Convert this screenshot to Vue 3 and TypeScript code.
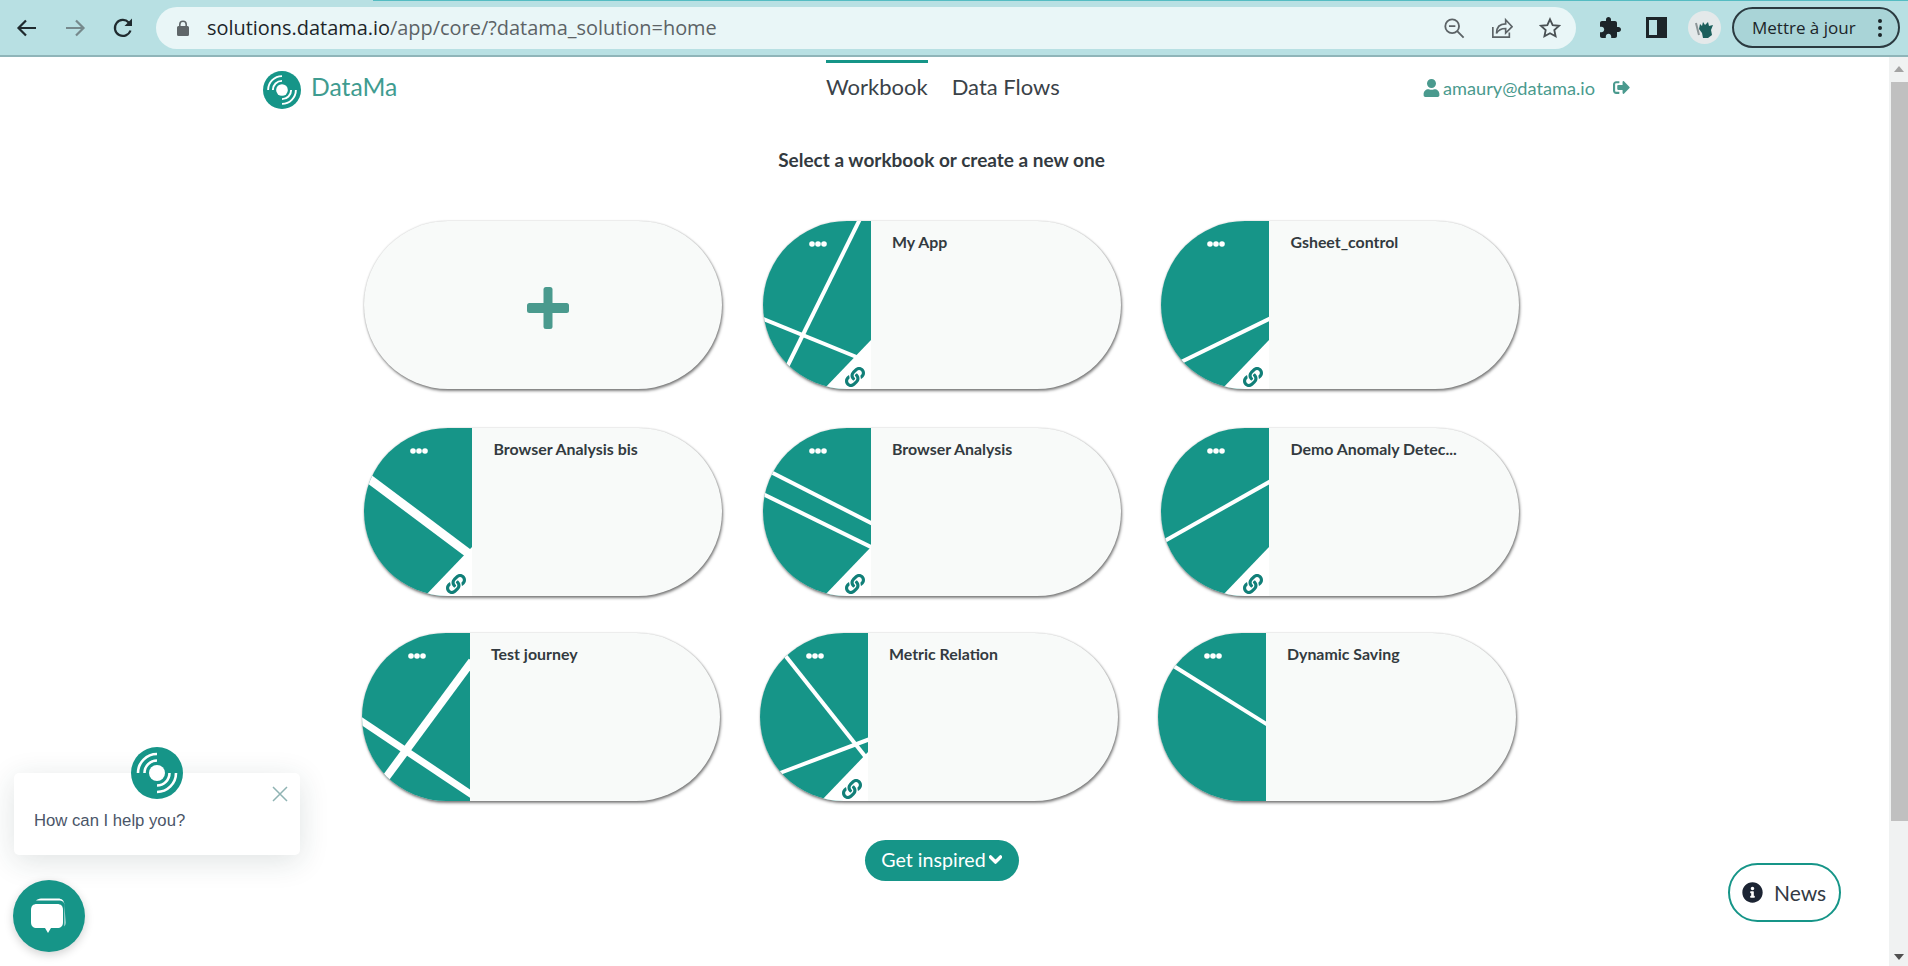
<script setup lang="ts">
interface Stripe {
  d: string
  width: number
}

interface Workbook {
  name: string
  stripes: Stripe[]
  linked: boolean
}

const linkPath =
  "M326.612 185.391c59.747 59.809 58.927 155.698.36 214.59-.11.12-.24.25-.36.37l-67.2 67.2c-59.27 59.27-155.699 59.262-214.96 0-59.27-59.26-59.27-155.7 0-214.96l37.106-37.106c9.84-9.84 26.786-3.3 27.294 10.606.648 17.722 3.826 35.527 9.69 52.721 1.986 5.822.567 12.262-3.783 16.612l-13.087 13.087c-28.026 28.026-28.905 73.66-1.155 101.96 28.024 28.579 74.086 28.749 102.325.51l67.2-67.19c28.191-28.191 28.073-73.757 0-101.83-3.701-3.694-7.429-6.564-10.341-8.569a16.037 16.037 0 0 1-6.947-12.606c-.396-10.567 3.348-21.456 11.698-29.806l21.054-21.055c5.521-5.521 14.182-6.199 20.584-1.731a152.482 152.482 0 0 1 20.522 17.197zM467.547 44.449c-59.261-59.262-155.69-59.27-214.96 0l-67.2 67.2c-.12.12-.25.25-.36.37-58.566 58.892-59.387 154.781.36 214.59a152.454 152.454 0 0 0 20.521 17.196c6.402 4.468 15.064 3.789 20.584-1.731l21.054-21.055c8.35-8.35 12.094-19.239 11.698-29.806a16.037 16.037 0 0 0-6.947-12.606c-2.912-2.005-6.64-4.875-10.341-8.569-28.073-28.073-28.191-73.639 0-101.83l67.2-67.19c28.239-28.239 74.3-28.069 102.325.51 27.75 28.3 26.872 73.934-1.155 101.96l-13.087 13.087c-4.35 4.35-5.769 10.79-3.783 16.612 5.864 17.194 9.042 34.999 9.69 52.721.509 13.906 17.454 20.446 27.294 10.606l37.106-37.106c59.271-59.259 59.271-155.699.001-214.959z"

const rows: Workbook[][] = [
  [
    {
      name: "My App",
      linked: true,
      stripes: [
        { d: "M97 -2 L24 146", width: 4 },
        { d: "M-2 97 L96 137", width: 4 },
      ],
    },
    {
      name: "Gsheet_control",
      linked: true,
      stripes: [{ d: "M110 97 L20 141", width: 4 }],
    },
  ],
  [
    {
      name: "Browser Analysis bis",
      linked: true,
      stripes: [{ d: "M0 47 L108 128", width: 9 }],
    },
    {
      name: "Browser Analysis",
      linked: true,
      stripes: [
        { d: "M0 40 L110 96", width: 4 },
        { d: "M0 66 L110 120", width: 4 },
      ],
    },
    {
      name: "Demo Anomaly Detec...",
      linked: true,
      stripes: [{ d: "M110 53 L0 115", width: 4 }],
    },
  ],
  [
    {
      name: "Test journey",
      linked: false,
      stripes: [
        { d: "M110 28 L23 146", width: 8 },
        { d: "M-2 87 L110 162", width: 7 },
      ],
    },
    {
      name: "Metric Relation",
      linked: true,
      stripes: [
        { d: "M24 21 L108 127", width: 4 },
        { d: "M110 106 L20 140", width: 4 },
      ],
    },
    {
      name: "Dynamic Saving",
      linked: false,
      stripes: [{ d: "M14 32 L110 92", width: 4 }],
    },
  ],
]
</script>

<template>
  <div class="page">
    <!-- browser toolbar -->
    <div class="toolbar">
      <div class="nav-buttons">
        <svg class="tb-icon" viewBox="0 0 24 24" fill="none" stroke="#1f2a2e" stroke-width="2.2">
          <path d="M21 12H4M11 4.5 3.5 12l7.5 7.5" />
        </svg>
        <svg class="tb-icon" viewBox="0 0 24 24" fill="none" stroke="#76898c" stroke-width="2.2">
          <path d="M3 12h17M13 4.5l7.5 7.5-7.5 7.5" />
        </svg>
        <svg class="tb-icon" viewBox="0 0 24 24" fill="none" stroke="#1f2a2e" stroke-width="2.2">
          <path d="M19.5 14.5A8 8 0 1 1 17.7 6.4L20 8.5" />
          <path d="M21 2.5v7.5h-7.5z" fill="#1f2a2e" stroke="none" />
        </svg>
      </div>

      <div class="omnibox">
        <svg class="lock" viewBox="0 0 12 16">
          <path d="M2 6V4.5a4 4 0 0 1 8 0V6h.5A1.5 1.5 0 0 1 12 7.5v7a1.5 1.5 0 0 1-1.5 1.5h-9A1.5 1.5 0 0 1 0 14.5v-7A1.5 1.5 0 0 1 1.5 6zm1.6 0h4.8V4.5a2.4 2.4 0 0 0-4.8 0z" fill="#5f6669" />
        </svg>
        <span class="url"><b>solutions.datama.io</b>/app/core/?datama_solution=home</span>
        <div class="omni-actions">
          <svg class="omni-icon" viewBox="0 0 24 24" fill="none" stroke="#5c6366" stroke-width="2">
            <circle cx="10" cy="10" r="7.5" />
            <path d="M6.5 10h7M15.5 15.5l7 7" />
          </svg>
          <svg class="omni-icon" viewBox="0 0 24 24" fill="none" stroke="#5c6366" stroke-width="1.8">
            <path d="M2 11v11h18v-5" />
            <path d="M6 18c0-7 4-10.500 10-10.500V3l7 7.500-7 7v-5C11 12.500 8 14 6 18z" />
          </svg>
          <svg class="omni-icon" viewBox="0 0 24 24" fill="none" stroke="#4a5154" stroke-width="2">
            <path d="M12 2.500l2.900 6.300 6.900.8-5.100 4.700 1.400 6.800-6.100-3.400-6.100 3.400 1.400-6.800-5.100-4.700 6.900-.8z" />
          </svg>
        </div>
      </div>

      <svg class="puzzle" viewBox="0 0 24 24">
        <path d="M20.500 11H19V7c0-1.100-.9-2-2-2h-4V3.500C13 2.120 11.880 1 10.500 1S8 2.120 8 3.500V5H4c-1.100 0-1.990.9-1.990 2v3.800H3.500c1.490 0 2.700 1.210 2.700 2.700s-1.210 2.700-2.700 2.700H2V20c0 1.100.9 2 2 2h3.800v-1.500c0-1.490 1.210-2.700 2.700-2.700 1.490 0 2.700 1.210 2.700 2.700V22H17c1.100 0 2-.9 2-2v-4h1.500c1.380 0 2.500-1.120 2.500-2.500S21.880 11 20.500 11z" fill="#1c2529" />
      </svg>
      <div class="side-panel"><span></span></div>
      <div class="avatar">
        <svg viewBox="0 0 33 33">
          <path d="M12 13l2 2 1-4 2 3 3-3 1 4 4-1-2 5 1 5-4 3h-5l-1-5-3-4z" fill="#1c5f5c" />
          <path d="M8 12l3 12" stroke="#8c9597" stroke-width="2" />
        </svg>
      </div>
      <div class="update-btn">
        <span>Mettre à jour</span>
        <i class="kebab"></i>
      </div>
    </div>

    <div class="viewport">
      <main class="main">
        <header class="header">
          <div class="brand">
            <svg class="logo" viewBox="0 0 52 52">
              <circle cx="26" cy="26" r="26" fill="#169588" />
              <circle cx="26" cy="26" r="8" fill="#fff" />
              <path d="M7 26A19 19 0 0 1 26 7M13.500 26A12.500 12.500 0 0 1 26 13.500M45 26A19 19 0 0 1 26 45M38.500 26A12.500 12.500 0 0 1 26 38.500" fill="none" stroke="#fff" stroke-width="2.600" />
            </svg>
            <span class="brand-name">DataMa</span>
          </div>
          <nav class="nav">
            <a class="nav-link active">Workbook</a>
            <a class="nav-link">Data Flows</a>
          </nav>
          <div class="user">
            <svg class="user-icon" viewBox="0 0 448 512">
              <path d="M224 256c70.700 0 128-57.300 128-128S294.700 0 224 0 96 57.300 96 128s57.300 128 128 128zm89.600 32h-16.700c-22.200 10.200-46.900 16-72.900 16s-50.600-5.800-72.900-16h-16.700C60.200 288 0 348.200 0 422.400V464c0 26.500 21.500 48 48 48h352c26.500 0 48-21.500 48-48v-41.600c0-74.200-60.200-134.400-134.400-134.400z" />
            </svg>
            <span class="email">amaury@datama.io</span>
            <svg class="logout-icon" viewBox="0 0 512 512">
              <path d="M497 273L329 441c-15 15-41 4.500-41-17v-96H152c-13.300 0-24-10.700-24-24v-96c0-13.300 10.700-24 24-24h136V88c0-21.400 25.900-32 41-17l168 168c9.300 9.400 9.300 24.600 0 34zM192 436v-40c0-6.600-5.400-12-12-12H96c-17.700 0-32-14.300-32-32V160c0-17.700 14.300-32 32-32h84c6.600 0 12-5.400 12-12V76c0-6.600-5.400-12-12-12H96c-53 0-96 43-96 96v192c0 53 43 96 96 96h84c6.600 0 12-5.400 12-12z" />
            </svg>
          </div>
        </header>

        <h1 class="title">Select a workbook or create a new one</h1>

        <section class="workbooks">
          <div v-for="(row, r) in rows" :key="r" class="row" :class="'row-' + r">
            <div v-if="r === 0" class="card card-new">
              <svg class="plus" viewBox="0 0 42 42">
                <rect x="0" y="16" width="42" height="10" rx="2.500" />
                <rect x="16.500" y="0" width="9" height="42" rx="2.500" />
              </svg>
            </div>
            <div v-for="wb in row" :key="wb.name" class="card">
              <svg class="card-panel" viewBox="0 0 108 168">
                <rect width="108" height="168" fill="#169588" />
                <path v-for="s in wb.stripes" :key="s.d" :d="s.d" stroke="#fff" :stroke-width="s.width" fill="none" />
                <template v-if="wb.linked">
                  <path d="M109 118 L60 169 H109 Z" fill="#fff" />
                  <svg x="82" y="146" width="20" height="20" viewBox="0 0 512 512">
                    <path :d="linkPath" fill="#117f78" />
                  </svg>
                </template>
                <circle cx="49" cy="23" r="2.800" fill="#fff" />
                <circle cx="55" cy="23" r="2.800" fill="#fff" />
                <circle cx="61" cy="23" r="2.800" fill="#fff" />
              </svg>
              <span class="card-name">{{ wb.name }}</span>
            </div>
          </div>
        </section>

        <button class="inspired">
          Get inspired
          <svg class="chevron" viewBox="0 0 448 512">
            <path d="M207.029 381.476L12.686 187.132c-9.373-9.373-9.373-24.569 0-33.941l22.667-22.667c9.357-9.357 24.522-9.375 33.901-.04L224 284.505l154.745-154.021c9.379-9.335 24.544-9.317 33.901.04l22.667 22.667c9.373 9.373 9.373 24.569 0 33.941L240.971 381.476c-9.373 9.372-24.569 9.372-33.942 0z" />
          </svg>
        </button>
      </main>

      <div class="scrollbar">
        <i class="arrow-up"></i>
        <div class="thumb"></div>
        <i class="arrow-down"></i>
      </div>

      <!-- floating widgets -->
      <div class="chat-card">
        <svg class="chat-logo" viewBox="0 0 52 52">
          <circle cx="26" cy="26" r="26" fill="#169588" />
          <circle cx="26" cy="26" r="8" fill="#fff" />
          <path d="M7 26A19 19 0 0 1 26 7M13.500 26A12.500 12.500 0 0 1 26 13.500M45 26A19 19 0 0 1 26 45M38.500 26A12.500 12.500 0 0 1 26 38.500" fill="none" stroke="#fff" stroke-width="2.600" />
        </svg>
        <svg class="chat-close" viewBox="0 0 16 16" fill="none" stroke="#8fb3b3" stroke-width="1.500">
          <path d="M1 1l14 14M15 1L1 15" />
        </svg>
        <span class="chat-text">How can I help you?</span>
      </div>
      <div class="chat-bubble">
        <svg viewBox="0 0 40 40" width="40" height="40">
          <path d="M12 2.500h17c4 0 6 2 6.500 6l1 18c0 2-.5 3-1 4V10c0-4-2-5.500-6-5.500H7c1-1 3-2 5-2z" fill="#fff" />
          <path d="M8 8h20c4 0 6 2 6 6v12c0 4-2 6-6 6h-6l-3 5-3-5H8c-4 0-6-2-6-6V14c0-4 2-6 6-6z" fill="#fff" />
        </svg>
      </div>
      <div class="news">
        <svg class="news-icon" viewBox="0 0 512 512">
          <path d="M256 8C119.043 8 8 119.083 8 256c0 136.997 111.043 248 248 248s248-111.003 248-248C504 119.083 392.957 8 256 8zm0 110c23.196 0 42 18.804 42 42s-18.804 42-42 42-42-18.804-42-42 18.804-42 42-42zm56 254c0 6.627-5.373 12-12 12h-88c-6.627 0-12-5.373-12-12v-24c0-6.627 5.373-12 12-12h12v-64h-12c-6.627 0-12-5.373-12-12v-24c0-6.627 5.373-12 12-12h64c6.627 0 12 5.373 12 12v100h12c6.627 0 12 5.373 12 12v24z" />
        </svg>
        <span>News</span>
      </div>
    </div>
  </div>
</template>

<style scoped>
.page {
  height: 966px;
  display: flex;
  flex-direction: column;
  overflow: hidden;
  background: #fff;
  font-family: Lato, "Liberation Sans", sans-serif;
  color: #333a40;
}

.toolbar {
  position: relative;
  flex: none;
  height: 55px;
  box-sizing: content-box;
  border-bottom: 2px solid #8fb5b9;
  background: #b8e0e3;
  display: flex;
  align-items: center;
}

.toolbar::before {
  content: "";
  position: absolute;
  top: 0;
  left: 373px;
  right: 0;
  height: 1px;
  background: #55bcc2;
}

.nav-buttons {
  flex: none;
  width: 156px;
  padding-left: 15px;
  box-sizing: border-box;
  display: flex;
  gap: 24px;
}

.tb-icon {
  width: 24px;
  height: 24px;
}

.omnibox {
  flex: none;
  width: 1420px;
  height: 42px;
  border-radius: 21px;
  background: #e9f6f7;
  display: flex;
  align-items: center;
  padding-left: 21px;
  box-sizing: border-box;
}

.lock {
  width: 12px;
  height: 16px;
}

.url {
  margin-left: 18px;
  font-family: "Open Sans", sans-serif;
  font-size: 19.930px;
  color: #5c6366;
  white-space: nowrap;
}

.url b {
  font-weight: 400;
  color: #1c2529;
}

.omni-actions {
  margin-left: auto;
  margin-right: 15px;
  display: flex;
  gap: 26px;
}

.omni-icon {
  width: 22px;
  height: 22px;
}

.puzzle {
  flex: none;
  width: 24px;
  height: 24px;
  margin-left: 22px;
}

.side-panel {
  flex: none;
  width: 21px;
  height: 21px;
  margin-left: 24px;
  box-sizing: border-box;
  border: 3px solid #1c2529;
  background: #1c2529;
  display: flex;
}

.side-panel span {
  width: 8px;
  background: #b8e0e3;
}

.avatar {
  flex: none;
  width: 33px;
  height: 33px;
  margin-left: 21px;
  border-radius: 50%;
  background: #e4e9ea;
}

.avatar svg {
  display: block;
}

.update-btn {
  flex: none;
  width: 168px;
  height: 41px;
  margin-left: 11px;
  box-sizing: border-box;
  border: 2px solid #2b3a40;
  border-radius: 21px;
  background: #a9d4d7;
  display: flex;
  align-items: center;
  padding-left: 18px;
  font-family: "Open Sans", sans-serif;
  font-size: 17px;
  color: #1c2529;
  white-space: nowrap;
}

.kebab {
  margin-left: 22px;
  width: 4px;
  height: 4px;
  border-radius: 50%;
  background: #1c2529;
  box-shadow: 0 -7px 0 #1c2529, 0 7px 0 #1c2529;
}

.viewport {
  position: relative;
  flex: 1;
  display: flex;
  min-height: 0;
}

.main {
  flex: none;
  width: 1883px;
  display: flex;
  flex-direction: column;
  align-items: center;
}

.header {
  align-self: stretch;
  height: 60px;
  padding: 3px 253px 0 263px;
  display: grid;
  grid-template-columns: 563px auto 1fr;
  box-sizing: border-box;
}

.brand {
  display: flex;
  align-items: center;
  gap: 10px;
  margin-top: 3px;
}

.logo {
  width: 38px;
  height: 38px;
}

.brand-name {
  margin-top: -7px;
  font-size: 24.700px;
  color: #3f9c90;
}

.nav {
  display: flex;
  gap: 24px;
}

.nav-link {
  border-top: 3px solid transparent;
  padding-top: 10px;
  font-size: 22px;
  line-height: 28px;
  color: #3a4248;
}

.nav-link.active {
  border-top-color: #169588;
}

.user {
  display: flex;
  align-items: center;
  justify-content: flex-end;
  margin-top: -2px;
  color: #4a9a8e;
}

.user-icon {
  width: 17px;
  height: 18px;
  fill: #4a9a8e;
}

.email {
  margin-left: 3px;
  font-size: 18.200px;
}

.logout-icon {
  width: 17px;
  height: 17px;
  margin-left: 18px;
  fill: #4a9a8e;
}

.title {
  margin: 31px 0 48.500px;
  font-size: 19px;
  line-height: 24px;
  font-weight: 700;
  color: #333a40;
}

.workbooks {
  display: flex;
  flex-direction: column;
}

.row {
  display: flex;
  justify-content: flex-start;
  gap: 40.500px;
}

.row-1 {
  margin-top: 39.500px;
}

.row-2 {
  margin-top: 37px;
  margin-left: -2.500px;
  gap: 40px;
}

.card {
  flex: none;
  width: 358px;
  height: 168px;
  border-radius: 84px;
  overflow: hidden;
  background: #f8faf9;
  box-shadow: 0 0 2px rgba(0, 0, 0, 0.2), 1px 2px 3px rgba(0, 0, 0, 0.5);
  display: flex;
  align-items: flex-start;
}

.card-new {
  align-items: center;
  justify-content: center;
  padding: 7px 0 0 10px;
  box-sizing: border-box;
}

.plus {
  width: 42px;
  height: 42px;
  fill: #4a9a8e;
}

.card-panel {
  flex: none;
  width: 108px;
  height: 168px;
}

.card-name {
  margin: 11px 0 0 21.500px;
  font-size: 15.900px;
  line-height: 20px;
  font-weight: 700;
  color: #333a40;
  white-space: nowrap;
}

.inspired {
  margin-top: 39px;
  width: 154px;
  height: 41px;
  border: none;
  border-radius: 21px;
  background: #169588;
  color: #fff;
  font-family: Lato, sans-serif;
  font-size: 19.600px;
  display: flex;
  align-items: center;
  justify-content: center;
  gap: 3px;
  padding: 0 0 2px;
}

.chevron {
  width: 13px;
  height: 15px;
  fill: #fff;
  stroke: #fff;
  stroke-width: 40;
}

.scrollbar {
  flex: none;
  width: 19px;
  margin-left: 6px;
  background: #f0f2f2;
  display: flex;
  flex-direction: column;
  align-items: flex-end;
  position: relative;
}

.thumb {
  width: 17px;
  height: 739px;
  margin-top: 10px;
  background: #c0c0c0;
}

.arrow-up {
  margin: 9px 4px 0 0;
  width: 0;
  height: 0;
  border-left: 5px solid transparent;
  border-right: 5px solid transparent;
  border-bottom: 6px solid #a3a3a3;
}

.arrow-down {
  margin: auto 4px 6px 0;
  width: 0;
  height: 0;
  border-left: 5px solid transparent;
  border-right: 5px solid transparent;
  border-top: 6px solid #505050;
}

.chat-card {
  position: absolute;
  left: 14px;
  top: 716px;
  width: 286px;
  height: 82px;
  box-sizing: border-box;
  border-radius: 5px;
  background: #fff;
  box-shadow: 0 6px 30px rgba(30, 60, 60, 0.14);
  padding: 36px 0 0 20px;
}

.chat-logo {
  position: absolute;
  left: 117px;
  top: -26px;
  width: 52px;
  height: 52px;
}

.chat-close {
  position: absolute;
  left: 258px;
  top: 13px;
  width: 16px;
  height: 16px;
}

.chat-text {
  font-family: "Liberation Sans", Arial, sans-serif;
  font-size: 16.700px;
  line-height: 24px;
  color: #4a5568;
}

.chat-bubble {
  position: absolute;
  left: 13px;
  top: 823px;
  width: 72px;
  height: 72px;
  border-radius: 50%;
  background: #169588;
  box-shadow: 0 3px 10px rgba(0, 0, 0, 0.18);
  display: flex;
  align-items: center;
  justify-content: center;
}

.news {
  position: absolute;
  left: 1728px;
  top: 806px;
  width: 113px;
  height: 59px;
  box-sizing: border-box;
  border: 2px solid #169588;
  border-radius: 30px;
  background: #fff;
  display: flex;
  align-items: center;
  padding-left: 12px;
  gap: 11px;
  font-size: 21px;
  color: #333a44;
}

.news-icon {
  width: 21px;
  height: 21px;
  fill: #1c2433;
}
</style>
